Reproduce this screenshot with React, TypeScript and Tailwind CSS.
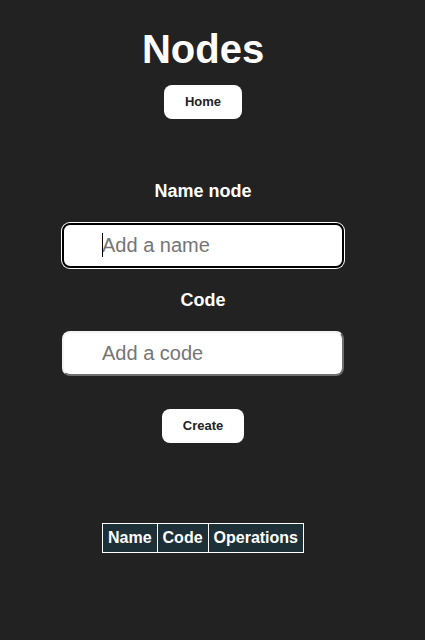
import React from "react";

export default function App() {
  return (
    <div className="min-h-[640px] w-full bg-[#222222] text-white" style={{ fontFamily: '"Liberation Sans", Arial, sans-serif' }}>
      <div className="flex w-[406px] flex-col items-center">
        <h1 className="mt-[29px] text-[40px] font-bold leading-[40px]">Nodes</h1>
        <button className="mt-[16px] h-[34px] w-[78px] rounded-lg bg-white text-[13px] font-bold text-[#222]">
          Home
        </button>

        <label className="mt-[62px] text-[18px] font-bold leading-[20px]">Name node</label>
        <div className="relative mt-[22px]">
          <input
            className="box-border h-[45px] w-[282px] rounded-lg border-2 border-black bg-white pl-[38px] text-[20px] text-black shadow-[0_0_0_1px_#ffffff] outline-none placeholder:text-[#757575]"
            placeholder="Add a name"
            readOnly
          />
          <span className="pointer-events-none absolute left-[40px] top-[10px] h-[24px] w-px bg-black" />
        </div>

        <label className="mt-[22px] text-[18px] font-bold leading-[20px]">Code</label>
        <input
          className="mt-[21px] box-border h-[45px] w-[282px] rounded-lg border-2 border-[#f4f4f4] border-b-[#6f6f6f] border-r-[#6f6f6f] bg-white pl-[38px] text-[20px] text-black outline-none placeholder:text-[#757575]"
          placeholder="Add a code"
          readOnly
        />

        <button className="mt-[33px] h-[34px] w-[82px] rounded-lg bg-white text-[13px] font-bold text-[#222]">
          Create
        </button>

        <table className="mt-[80px] border-collapse bg-[#1e3037] text-[16px] font-bold leading-[18px]">
          <thead>
            <tr>
              <th className="border border-white px-[5px] py-[5px]">Name</th>
              <th className="border border-white px-[5px] py-[5px]">Code</th>
              <th className="border border-white px-[5px] py-[5px]">Operations</th>
            </tr>
          </thead>
        </table>
      </div>
    </div>
  );
}
